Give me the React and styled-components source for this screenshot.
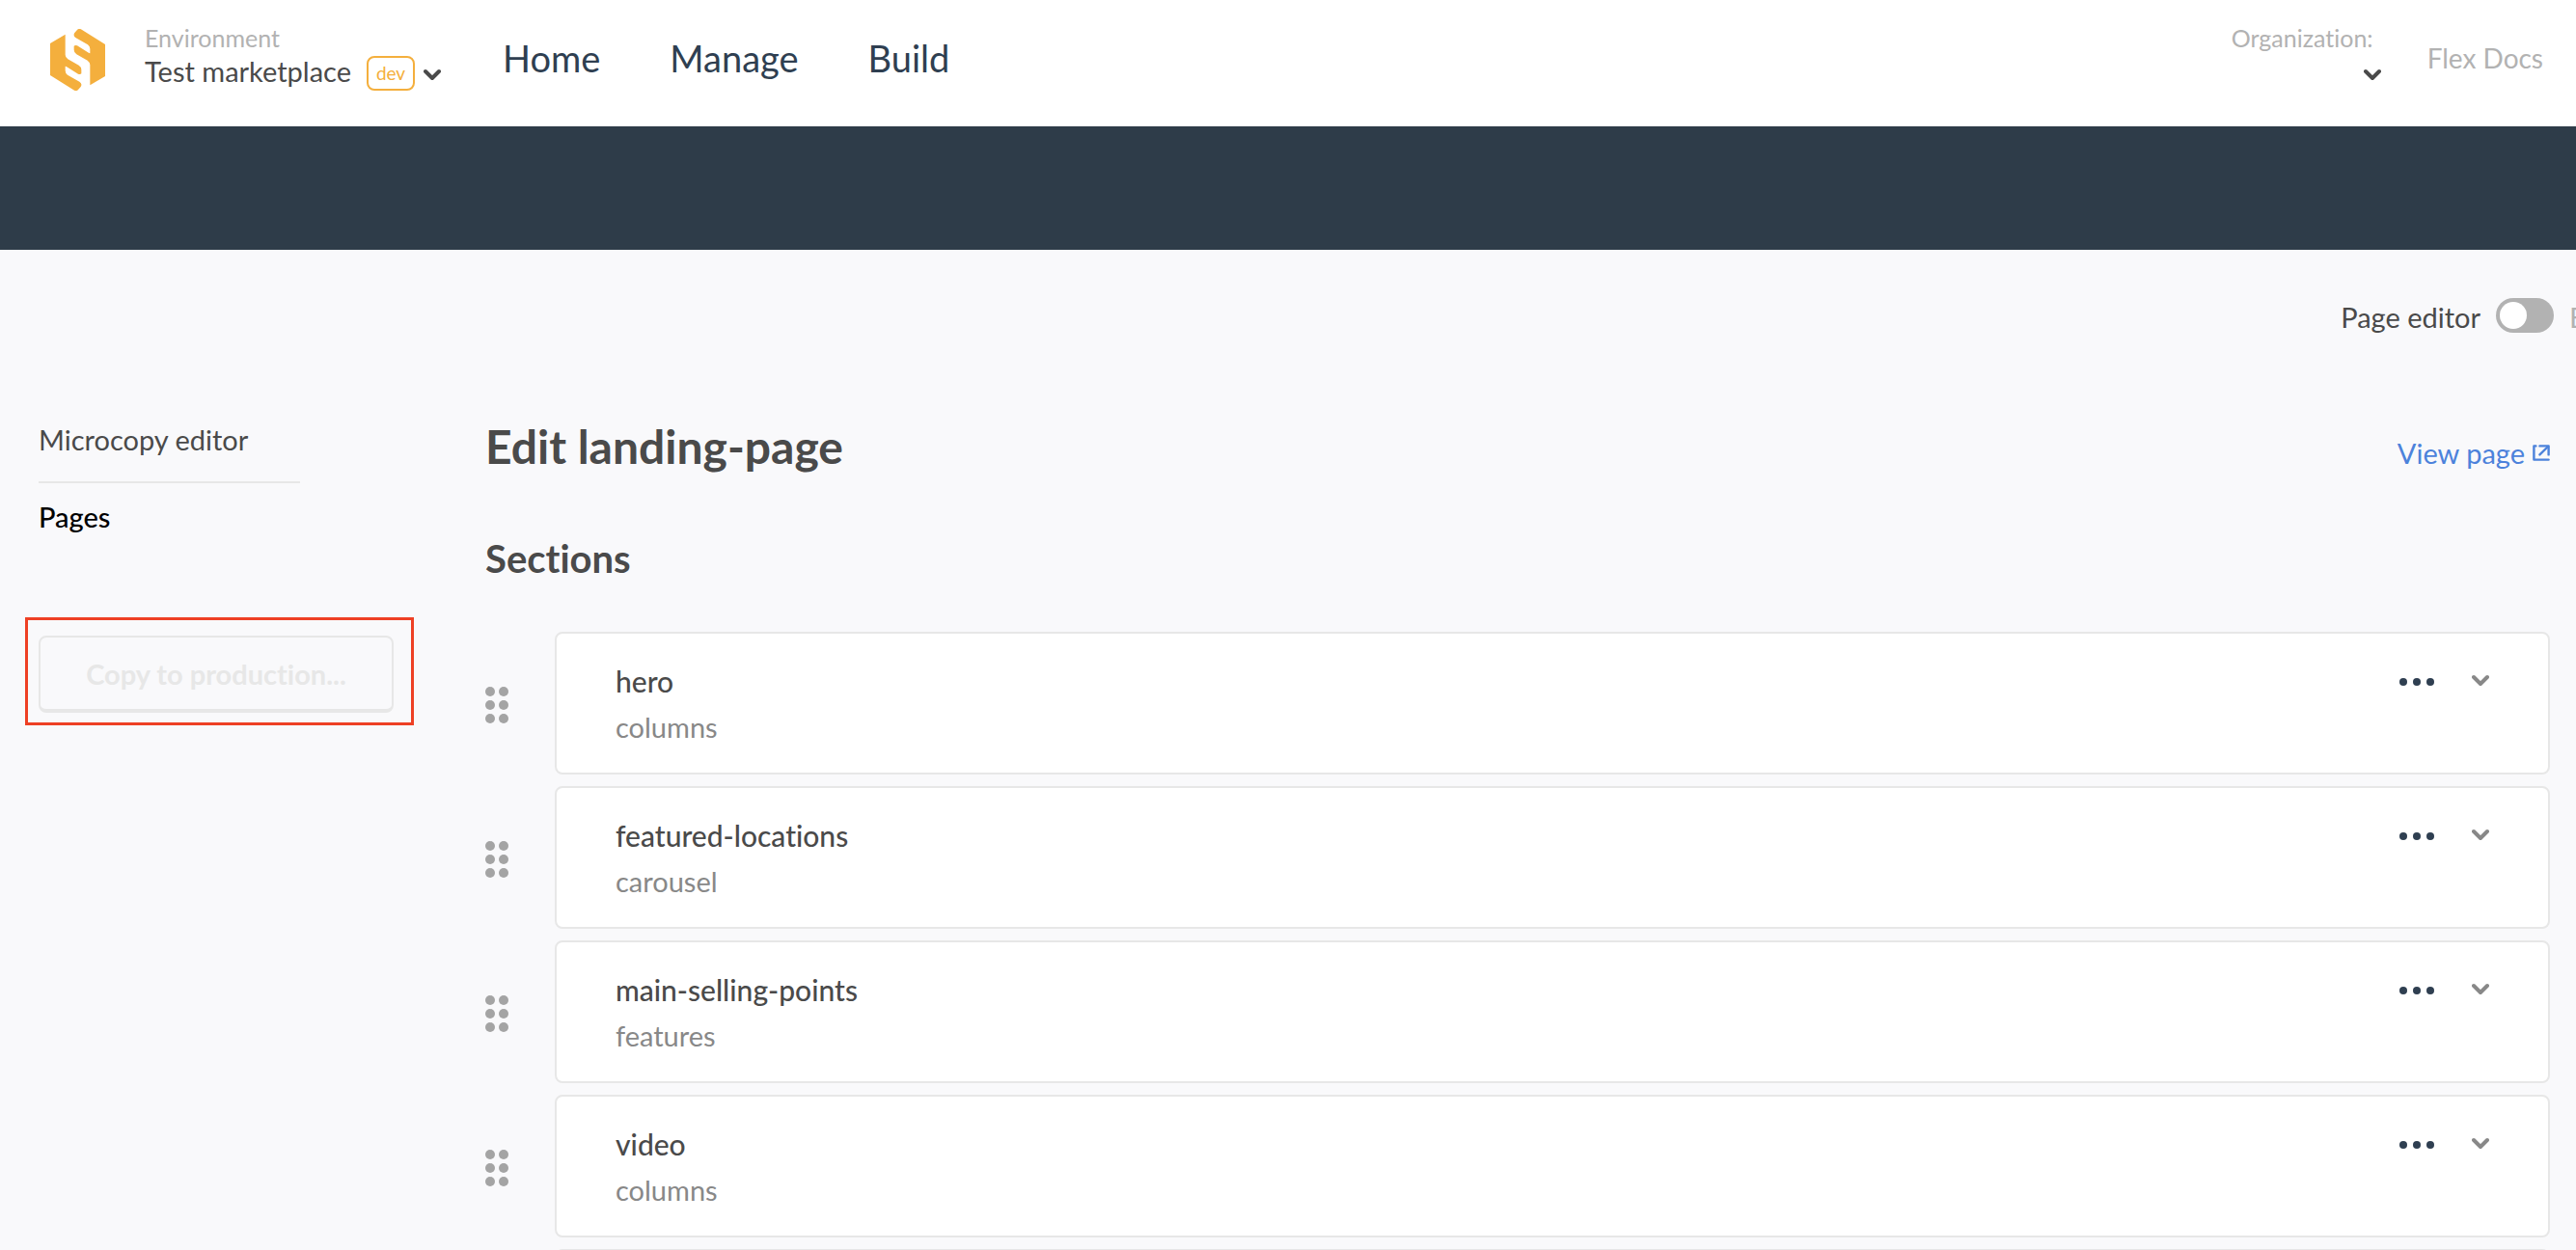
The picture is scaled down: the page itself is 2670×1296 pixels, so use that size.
import React from "react";
import styled, { createGlobalStyle } from "styled-components";

const color = {
  text: "#4a4a4a",
  muted: "#b2b2b2",
  subtle: "#888888",
  navy: "#2e3c49",
  ink: "#2f3f51",
  line: "#e7e7e7",
  page: "#f9f9fb",
  orange: "#f4af3d",
  blue: "#4c82db",
  red: "#ee4024",
};

const GlobalStyle = createGlobalStyle`
  *, *::before, *::after { box-sizing: border-box; }
  body {
    margin: 0;
    background: ${color.page};
    color: ${color.text};
    font-family: Lato, "Open Sans", sans-serif;
    font-size: 29px;
    font-variant-ligatures: none;
  }
  button {
    padding: 0;
    border: 0;
    background: none;
    color: inherit;
    font: inherit;
    cursor: pointer;
  }
  a { color: inherit; text-decoration: none; }
  h1, h2, h3, p, ul { margin: 0; padding: 0; }
  li { list-style: none; }
  svg { display: block; flex: none; }
`;

const Page = styled.div`
  display: flex;
  flex-direction: column;
  height: 100vh;
  overflow: hidden;
`;

const TopBar = styled.header`
  display: flex;
  flex: none;
  align-items: center;
  height: 131px;
  padding: 0 34px 8px 52px;
  background: #fff;
`;

const Switcher = styled.div`
  display: flex;
  flex-direction: column;
  gap: 6px;
  align-items: ${(p) => (p.$end ? "flex-end" : "flex-start")};
  margin-left: ${(p) => (p.$end ? "auto" : "41px")};
  padding-bottom: 4px;
`;

const SwitcherLabel = styled.span`
  padding-right: ${(p) => (p.$inset ? "8px" : "0")};
  color: ${color.muted};
  font-size: 25px;
  line-height: 26px;
`;

const SwitcherButton = styled.button`
  display: flex;
  align-items: flex-start;
  height: 36px;
  line-height: 32px;
  white-space: nowrap;
  svg { align-self: center; }
`;

const Badge = styled.span`
  display: flex;
  align-items: center;
  justify-content: center;
  width: 50px;
  height: 36px;
  margin: 0 9px 0 16px;
  border: 2px solid ${color.orange};
  border-radius: 8px;
  color: ${color.orange};
  font-size: 19px;
`;

const MainNav = styled.nav`
  display: flex;
  gap: 72px;
  margin-left: 64px;
  padding-bottom: 4px;
  color: ${color.ink};
  font-size: 38px;
  line-height: 44px;
`;

const AccountLink = styled.a`
  margin-left: 48px;
  padding-bottom: 4px;
  color: ${color.muted};
  font-size: 28px;
  line-height: 36px;
`;

const Band = styled.div`
  flex: none;
  height: 128px;
  background: ${color.navy};
`;

const ModeRow = styled.div`
  display: flex;
  flex: none;
  align-items: center;
  justify-content: flex-end;
  gap: 16px;
  height: 173px;
  padding-bottom: 37px;
  line-height: 36px;
`;

const ModeLabel = styled.label`
  padding-top: 3px;
`;

const Toggle = styled.input`
  appearance: none;
  display: flex;
  width: 60px;
  height: 36px;
  margin: 0;
  padding: 4px;
  border-radius: 18px;
  background: ${color.muted};
  cursor: pointer;
  &::before {
    content: "";
    width: 28px;
    height: 28px;
    border-radius: 50%;
    background: #fff;
  }
  &:checked { justify-content: flex-end; }
`;

const ClippedLabel = styled.span`
  width: 7px;
  padding-top: 3px;
  color: ${color.muted};
  white-space: nowrap;
`;

const Columns = styled.div`
  display: flex;
  gap: 74px;
  padding: 0 27px 0 26px;
`;

const Sidebar = styled.aside`
  flex: none;
  width: 403px;
  padding-top: 8px;
`;

const SideNav = styled.ul`
  width: 271px;
  margin: 0 0 88px 14px;
`;

const SideItem = styled.li`
  padding-bottom: ${(p) => (p.$divided ? "27px" : "0")};
  margin-bottom: ${(p) => (p.$divided ? "19px" : "0")};
  border-bottom: ${(p) => (p.$divided ? `2px solid ${color.line}` : "0")};
  color: ${(p) => (p.$active ? "#000" : color.text)};
  font-weight: ${(p) => (p.$active ? "500" : "400")};
  line-height: 32px;
`;

const Highlight = styled.div`
  padding: 16px 18px 10px 11px;
  border: 3px solid ${color.red};
`;

const CopyButton = styled.button`
  width: 100%;
  height: 80px;
  border: 2px solid ${color.line};
  border-bottom-width: 4px;
  border-radius: 8px;
  color: ${color.line};
  font-weight: 700;
`;

const Main = styled.main`
  flex: 1;
  min-width: 0;
  padding-top: 3px;
`;

const TitleRow = styled.div`
  display: flex;
  align-items: baseline;
  justify-content: space-between;
  margin-bottom: 64px;
`;

const Title = styled.h1`
  font-size: 48px;
  font-weight: 700;
  line-height: 56px;
`;

const ViewLink = styled.a`
  display: flex;
  align-items: center;
  gap: 8px;
  color: ${color.blue};
`;

const Subtitle = styled.h2`
  margin-bottom: 52px;
  font-size: 40px;
  font-weight: 700;
  line-height: 48px;
`;

const SectionList = styled.ul`
  display: flex;
  flex-direction: column;
  gap: 12px;
`;

const SectionRow = styled.li`
  display: flex;
  align-items: center;
  gap: 48px;
`;

const DragHandle = styled.button`
  flex: none;
  padding-top: 4px;
  cursor: grab;
`;

const Card = styled.article`
  display: flex;
  flex: 1;
  align-items: flex-start;
  justify-content: space-between;
  min-height: 148px;
  padding: 31px 61px;
  border: 2px solid ${color.line};
  border-radius: 8px;
  background: #fff;
`;

const SectionName = styled.h3`
  margin-bottom: 14px;
  font-size: 30px;
  font-weight: 500;
  line-height: 36px;
`;

const SectionType = styled.p`
  color: ${color.subtle};
  line-height: 32px;
`;

const CardActions = styled.div`
  display: flex;
  align-items: center;
  gap: 39px;
  height: 38px;
`;

const Logo = () => {
  const half =
    "M156 135 L203 107 V170 Q203 178 211 184 L245 203 Q253 208 253 217 V229 Q249 233 243 230 L211 210 Q205 206 203 206 V220 Q203 228 210 233 L247 254 Q257 261 251 270 L243 279 Q237 285 229 280 L156 234 Z";
  return (
    <svg width="57" height="64" viewBox="156 90 171 192" fill={color.orange} aria-label="Logo">
      <path d={half} />
      <path d={half} transform="rotate(180 241.5 186)" />
    </svg>
  );
};

const Chevron = ({ stroke = color.text }) => (
  <svg width="18" height="16" viewBox="0 0 18 16" fill="none" stroke={stroke} strokeWidth="4" strokeLinecap="round" strokeLinejoin="round">
    <path d="M2 6 L9 13 L16 6" />
  </svg>
);

const CardChevron = () => (
  <svg width="18" height="16" viewBox="0 0 18 16" fill="none" stroke={color.subtle} strokeWidth="4" strokeLinecap="round" strokeLinejoin="round">
    <path d="M2 3 L9 10 L16 3" />
  </svg>
);

const Dots = ({ cols, rows, radius, fill }) => {
  const w = (cols - 1) * 14 + radius * 2;
  const h = (rows - 1) * 14 + radius * 2;
  const dots = [];
  for (let r = 0; r < rows; r += 1)
    for (let c = 0; c < cols; c += 1)
      dots.push(<circle key={`${r}-${c}`} cx={radius + c * 14} cy={radius + r * 14} r={radius} />);
  return (
    <svg width={w} height={h} fill={fill}>
      {dots}
    </svg>
  );
};

const ExternalIcon = () => (
  <svg width="18" height="17" viewBox="0 0 18 17" fill="none" stroke={color.blue} strokeWidth="2.4" strokeLinecap="round" strokeLinejoin="round">
    <path d="M3.4 1.4 H1.4 V15.6 H16.6" />
    <path d="M7.4 1.4 H16.6 V10.4" />
    <path d="M7.4 10.4 L16 2" />
  </svg>
);

const sections = [
  { name: "hero", type: "columns" },
  { name: "featured-locations", type: "carousel" },
  { name: "main-selling-points", type: "features" },
  { name: "video", type: "columns" },
];

export default function App() {
  return (
    <Page>
      <GlobalStyle />
      <TopBar>
        <Logo />
        <Switcher>
          <SwitcherLabel>Environment</SwitcherLabel>
          <SwitcherButton aria-haspopup="true">
            Test marketplace
            <Badge>dev</Badge>
            <Chevron />
          </SwitcherButton>
        </Switcher>
        <MainNav>
          <a href="#home">Home</a>
          <a href="#manage">Manage</a>
          <a href="#build">Build</a>
        </MainNav>
        <Switcher $end>
          <SwitcherLabel $inset>Organization:</SwitcherLabel>
          <SwitcherButton aria-label="Choose organization" aria-haspopup="true">
            <Chevron />
          </SwitcherButton>
        </Switcher>
        <AccountLink href="#account">Flex Docs</AccountLink>
      </TopBar>
      <Band />
      <ModeRow>
        <ModeLabel htmlFor="editor-mode">Page editor</ModeLabel>
        <Toggle id="editor-mode" type="checkbox" role="switch" />
        <ClippedLabel>E</ClippedLabel>
      </ModeRow>
      <Columns>
        <Sidebar>
          <SideNav>
            <SideItem $divided>
              <a href="#microcopy">Microcopy editor</a>
            </SideItem>
            <SideItem $active>
              <a href="#pages">Pages</a>
            </SideItem>
          </SideNav>
          <Highlight>
            <CopyButton disabled>Copy to production...</CopyButton>
          </Highlight>
        </Sidebar>
        <Main>
          <TitleRow>
            <Title>Edit landing-page</Title>
            <ViewLink href="#view">
              View page
              <ExternalIcon />
            </ViewLink>
          </TitleRow>
          <Subtitle>Sections</Subtitle>
          <SectionList>
            {sections.map((s) => (
              <SectionRow key={s.name}>
                <DragHandle aria-label={`Move ${s.name}`}>
                  <Dots cols={2} rows={3} radius={5} fill="#a4a4a4" />
                </DragHandle>
                <Card>
                  <div>
                    <SectionName>{s.name}</SectionName>
                    <SectionType>{s.type}</SectionType>
                  </div>
                  <CardActions>
                    <button aria-label={`Options for ${s.name}`}>
                      <Dots cols={3} rows={1} radius={4} fill={color.ink} />
                    </button>
                    <button aria-label={`Expand ${s.name}`}>
                      <CardChevron />
                    </button>
                  </CardActions>
                </Card>
              </SectionRow>
            ))}
            <SectionRow>
              <DragHandle aria-label="Move section">
                <Dots cols={2} rows={3} radius={5} fill="#a4a4a4" />
              </DragHandle>
              <Card />
            </SectionRow>
          </SectionList>
        </Main>
      </Columns>
    </Page>
  );
}
